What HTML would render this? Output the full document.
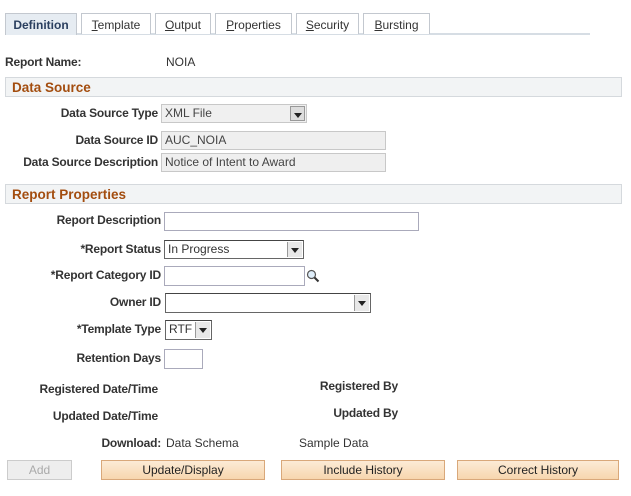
<!DOCTYPE html>
<html><head><style>
body{margin:0;width:631px;height:496px;background:#fff;font-family:"Liberation Sans",Arial,sans-serif;font-size:12px;color:#333;position:relative;overflow:hidden}
.a{position:absolute;white-space:nowrap}
.l{position:absolute;font-weight:bold;color:#333;text-align:right;white-space:nowrap;line-height:14px;letter-spacing:-0.2px}
.tab{position:absolute;top:13px;height:21px;border:1px solid #c3c8cf;border-bottom:none;background:#fff;font-size:12px;line-height:22px;text-align:center;color:#333;box-sizing:border-box}
.tab u{text-decoration:underline}
.bar{position:absolute;left:5px;width:617px;height:20px;background:#f2f4f5;border:1px solid #d5d9dd;box-sizing:border-box;color:#a34d0f;font-weight:bold;font-size:13.5px;line-height:19px;padding-left:6px}
.box{position:absolute;border:1px solid #aab;background:#fff;box-sizing:border-box;font-size:12px;line-height:16px;padding-left:3px}
.ro{background:#efefef;border-color:#c8c8c8;color:#444}
.sel{border:1px solid #666;border-top-color:#444}
.dd{position:absolute;right:1px;top:1px;bottom:1px;width:15px;background:#e8e8e8;border-left:1px solid #999;box-sizing:border-box}
.dd:after{content:"";position:absolute;left:3px;top:6px;border-left:4px solid transparent;border-right:4px solid transparent;border-top:5px solid #222}
.btn{position:absolute;top:460px;height:20px;border:1px solid #d9a87a;background:linear-gradient(#fcebd6,#f7d6ae);box-sizing:border-box;text-align:center;line-height:18px;color:#222;font-size:12px}
</style></head><body>
<div class="a" style="left:77px;top:33px;width:513px;height:2px;background:#d6dde4"></div>
<div class="tab" style="left:5px;width:72px;height:22px;background:#e6ecf2;border-color:#c3c8cf;font-weight:bold;color:#2a3f5f">Definition</div>
<div class="tab" style="left:81px;width:70px"><u>T</u>emplate</div>
<div class="tab" style="left:155px;width:56px"><u>O</u>utput</div>
<div class="tab" style="left:215px;width:77px"><u>P</u>roperties</div>
<div class="tab" style="left:296px;width:63px"><u>S</u>ecurity</div>
<div class="tab" style="left:363px;width:67px"><u>B</u>ursting</div>

<div class="l" style="left:5px;top:55px">Report Name:</div>
<div class="a" style="left:166px;top:55px">NOIA</div>

<div class="bar" style="top:77px">Data Source</div>
<div class="l" style="right:473px;top:106px">Data Source Type</div>
<div class="box ro" style="left:161px;top:104px;width:146px;height:19px;background:#f0f0f0">XML File<div class="dd" style="background:#ddd;border:1px solid #999;right:1px"></div></div>
<div class="l" style="right:473px;top:133px">Data Source ID</div>
<div class="box ro" style="left:161px;top:131px;width:225px;height:19px">AUC_NOIA</div>
<div class="l" style="right:473px;top:155px">Data Source Description</div>
<div class="box ro" style="left:161px;top:153px;width:225px;height:19px">Notice of Intent to Award</div>

<div class="bar" style="top:184px">Report Properties</div>
<div class="l" style="right:470px;top:213px">Report Description</div>
<div class="box" style="left:164px;top:212px;width:255px;height:19px"></div>
<div class="l" style="right:470px;top:242px">*Report Status</div>
<div class="box sel" style="left:164px;top:240px;width:140px;height:19px">In Progress<div class="dd"></div></div>
<div class="l" style="right:470px;top:268px">*Report Category ID</div>
<div class="box" style="left:164px;top:266px;width:141px;height:20px"></div>
<svg class="a" style="left:306px;top:269px" width="14" height="14" viewBox="0 0 14 14"><circle cx="5.5" cy="5.5" r="4" fill="#dfeefa" stroke="#555" stroke-width="1.2"/><path d="M8.5 8.5L12.5 12.5" stroke="#333" stroke-width="2"/></svg>
<div class="l" style="right:470px;top:295px">Owner ID</div>
<div class="box sel" style="left:165px;top:293px;width:206px;height:20px"><div class="dd"></div></div>
<div class="l" style="right:470px;top:322px">*Template Type</div>
<div class="box sel" style="left:165px;top:320px;width:47px;height:20px">RTF<div class="dd"></div></div>
<div class="l" style="right:470px;top:351px">Retention Days</div>
<div class="box" style="left:164px;top:349px;width:39px;height:20px"></div>

<div class="l" style="right:473px;top:382px">Registered Date/Time</div>
<div class="l" style="right:233px;top:379px">Registered By</div>
<div class="l" style="right:473px;top:409px">Updated Date/Time</div>
<div class="l" style="right:233px;top:406px">Updated By</div>
<div class="l" style="right:470px;top:436px">Download:</div>
<div class="a" style="left:166px;top:436px">Data Schema</div>
<div class="a" style="left:299px;top:436px">Sample Data</div>

<div class="btn" style="left:7px;width:65px;background:#eee;border-color:#ccc;color:#aaa">Add</div>
<div class="btn" style="left:101px;width:164px">Update/Display</div>
<div class="btn" style="left:281px;width:164px">Include History</div>
<div class="btn" style="left:457px;width:162px">Correct History</div>
</body></html>
